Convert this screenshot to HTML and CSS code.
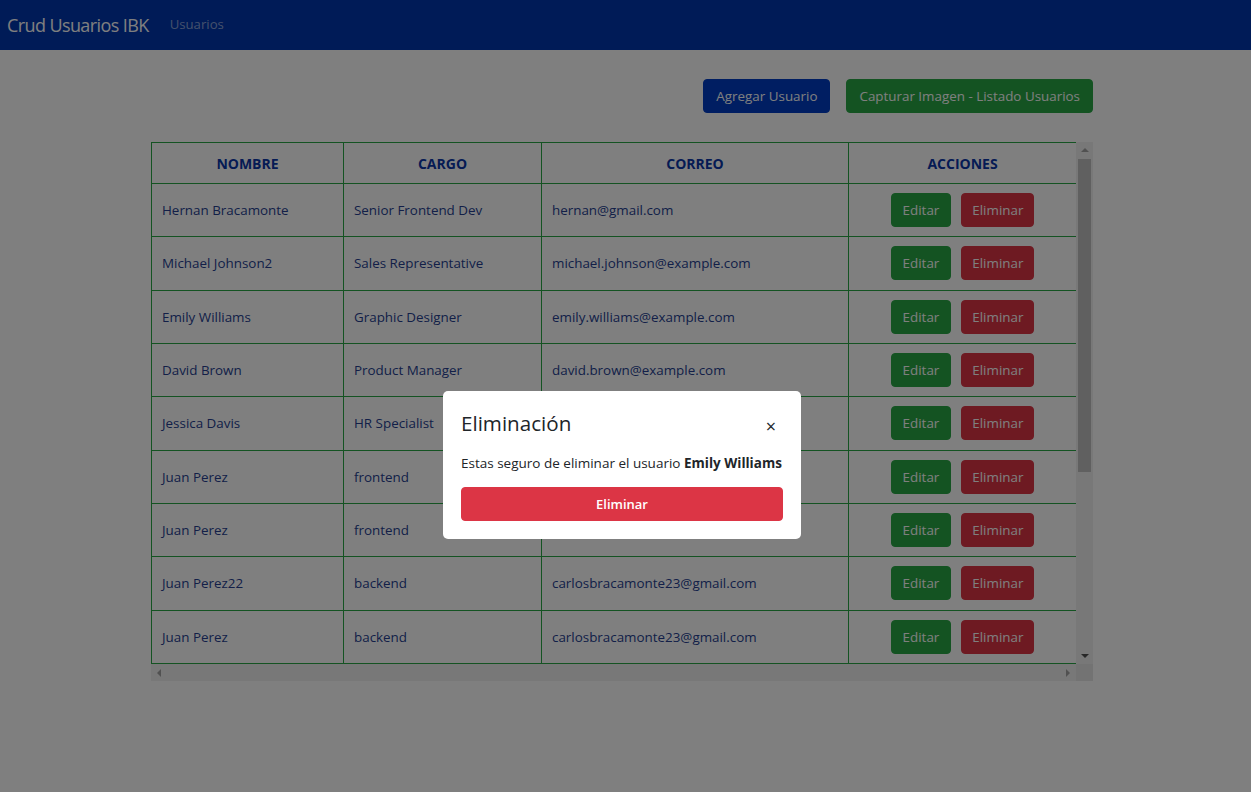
FILE: index.html
```html
<!DOCTYPE html>
<html lang="es">
<head>
<meta charset="utf-8">
<title>Crud Usuarios IBK</title>
<link rel="stylesheet" href="styles.css">
</head>
<body>
<nav class="navbar">
  <span class="brand">Crud Usuarios IBK</span>
  <a class="nav-link" href="#">Usuarios</a>
</nav>

<main class="content">
  <div class="toolbar">
    <button class="btn btn-primary">Agregar Usuario</button>
    <button class="btn btn-success">Capturar Imagen - Listado Usuarios</button>
  </div>

  <div class="table-frame">
    <div class="table-viewport">
      <table class="users">
        <colgroup>
          <col class="c1"><col class="c2"><col class="c3"><col class="c4">
        </colgroup>
        <thead>
          <tr><th>NOMBRE</th><th>CARGO</th><th>CORREO</th><th>ACCIONES</th></tr>
        </thead>
        <tbody>
          <tr><td>Hernan Bracamonte</td><td>Senior Frontend Dev</td><td>hernan@gmail.com</td><td class="actions"><button class="btn btn-edit">Editar</button><button class="btn btn-del">Eliminar</button></td></tr>
          <tr><td>Michael Johnson2</td><td>Sales Representative</td><td>michael.johnson@example.com</td><td class="actions"><button class="btn btn-edit">Editar</button><button class="btn btn-del">Eliminar</button></td></tr>
          <tr><td>Emily Williams</td><td>Graphic Designer</td><td>emily.williams@example.com</td><td class="actions"><button class="btn btn-edit">Editar</button><button class="btn btn-del">Eliminar</button></td></tr>
          <tr><td>David Brown</td><td>Product Manager</td><td>david.brown@example.com</td><td class="actions"><button class="btn btn-edit">Editar</button><button class="btn btn-del">Eliminar</button></td></tr>
          <tr><td>Jessica Davis</td><td>HR Specialist</td><td>jessica.davis@example.com</td><td class="actions"><button class="btn btn-edit">Editar</button><button class="btn btn-del">Eliminar</button></td></tr>
          <tr><td>Juan Perez</td><td>frontend</td><td>carlosbracamonte23@gmail.com</td><td class="actions"><button class="btn btn-edit">Editar</button><button class="btn btn-del">Eliminar</button></td></tr>
          <tr><td>Juan Perez</td><td>frontend</td><td>carlosbracamonte23@gmail.com</td><td class="actions"><button class="btn btn-edit">Editar</button><button class="btn btn-del">Eliminar</button></td></tr>
          <tr><td>Juan Perez22</td><td>backend</td><td>carlosbracamonte23@gmail.com</td><td class="actions"><button class="btn btn-edit">Editar</button><button class="btn btn-del">Eliminar</button></td></tr>
          <tr><td>Juan Perez</td><td>backend</td><td>carlosbracamonte23@gmail.com</td><td class="actions"><button class="btn btn-edit">Editar</button><button class="btn btn-del">Eliminar</button></td></tr>
        </tbody>
      </table>
    </div>
    <div class="vscroll">
      <span class="arrow arrow-up"></span>
      <span class="vthumb"></span>
      <span class="vspace"></span>
      <span class="arrow arrow-down"></span>
    </div>
    <div class="hscroll">
      <span class="arrow arrow-left"></span>
      <span class="arrow arrow-right"></span>
    </div>
    <div class="corner"></div>
  </div>
</main>

<div class="backdrop">
  <div class="modal">
    <div class="modal-header">
      <h5 class="modal-title">Eliminación</h5>
      <button class="close" aria-label="Cerrar">×</button>
    </div>
    <p class="modal-text">Estas seguro de eliminar el usuario <strong>Emily Williams</strong></p>
    <button class="btn btn-confirm">Eliminar</button>
  </div>
</div>
</body>
</html>
```

FILE: styles.css
```css
* { box-sizing: border-box; }

html, body {
  margin: 0;
  padding: 0;
  background: #ffffff;
  font-family: "Open Sans", "Noto Sans", "Liberation Sans", sans-serif;
  color: #212529;
}

.navbar {
  height: 50px;
  background: #0036ae;
  display: flex;
  align-items: center;
  padding: 0 7px;
}

.brand {
  color: #ffffff;
  font-size: 18px;
  letter-spacing: -0.6px;
  line-height: 1;
  margin-right: 21px;
}

.nav-link {
  color: rgba(255, 255, 255, 0.55);
  text-decoration: none;
  font-size: 13.2px;
  margin-top: -2px;
}

.content {
  width: 942px;
  margin-left: 151px;
}

.toolbar {
  display: flex;
  justify-content: flex-end;
  gap: 16px;
  margin-top: 29px;
  margin-bottom: 29px;
}

.btn {
  font-family: inherit;
  font-size: 13.4px;
  line-height: 20px;
  height: 34px;
  padding: 0 11px;
  border: 1px solid transparent;
  border-radius: 4px;
  color: #ffffff;
  cursor: pointer;
}

.btn-primary { background: #003cc4; border-color: #003cc4; padding: 0 12px; }
.btn-success { background: #28a745; border-color: #28a745; padding: 0 12px; }
.btn-edit { background: #28a745; border-color: #28a745; }
.btn-del { background: #dc3545; border-color: #dc3545; padding: 0 10px; }

.table-frame {
  display: grid;
  grid-template-columns: 925px 17px;
  grid-template-rows: 522px 17px;
}

.table-viewport {
  overflow: hidden;
}

.users {
  border-collapse: collapse;
  width: 925px;
  table-layout: fixed;
  color: #263f91;
  font-size: 13.4px;
}

.users .c1 { width: 192px; }
.users .c2 { width: 198px; }
.users .c3 { width: 307px; }
.users .c4 { width: 228px; }

.users th, .users td {
  border: 1px solid #28a745;
}

.users th {
  height: 41px;
  font-weight: 700;
  text-align: center;
  font-size: 14px;
  color: #0a36a8;
  padding: 0 10px;
}

.users td {
  height: 53.34px;
  padding: 0 10px;
  vertical-align: middle;
  white-space: nowrap;
}

.users td.actions {
  text-align: center;
  padding: 0;
}

.users td.actions .btn + .btn {
  margin-left: 10px;
}

.vscroll {
  background: #f1f1f1;
  display: flex;
  flex-direction: column;
  align-items: center;
}

.vthumb {
  width: 13px;
  height: 313px;
  background: #c1c1c1;
  margin-top: 7px;
}

.vspace { flex: 1; }

.hscroll {
  background: #f1f1f1;
  display: flex;
  align-items: center;
  justify-content: space-between;
  padding: 0 6px;
}

.corner { background: #e6e6e6; }

.arrow {
  display: block;
  width: 0;
  height: 0;
  border: 4px solid transparent;
}

.arrow-up {
  border-top-width: 0;
  border-bottom: 4px solid #a3a3a3;
  margin-top: 6px;
}

.arrow-down {
  border-bottom-width: 0;
  border-top: 4px solid #505050;
  margin-bottom: 6px;
}

.arrow-left {
  border-left-width: 0;
  border-right: 4px solid #a3a3a3;
}

.arrow-right {
  border-right-width: 0;
  border-left: 4px solid #a3a3a3;
}

.backdrop {
  position: fixed;
  inset: 0;
  background: rgba(0, 0, 0, 0.5);
  display: flex;
  align-items: flex-start;
  justify-content: flex-start;
  padding: 391px 0 0 443px;
}

.modal {
  width: 358px;
  background: #ffffff;
  border-radius: 5px;
  padding: 20px 18px 18px;
}

.modal-header {
  display: flex;
  align-items: center;
  justify-content: space-between;
  height: 24px;
}

.modal-title {
  margin: 0;
  font-size: 20.6px;
  font-weight: 400;
  line-height: 24px;
  color: #212529;
}

.close {
  background: none;
  border: none;
  padding: 0;
  font-family: inherit;
  font-size: 18px;
  line-height: 1;
  color: #212529;
  margin: 6px 7px 0 0;
  cursor: pointer;
}

.modal-text {
  margin: 18px 0 14px;
  font-size: 13.5px;
  line-height: 20px;
  color: #212529;
  white-space: nowrap;
}

.modal-text strong { font-weight: 700; }

.btn-confirm {
  display: block;
  width: 100%;
  height: 34px;
  background: #dc3545;
  border-color: #dc3545;
  font-size: 13px;
  font-weight: 600;
  padding: 0;
}
```
